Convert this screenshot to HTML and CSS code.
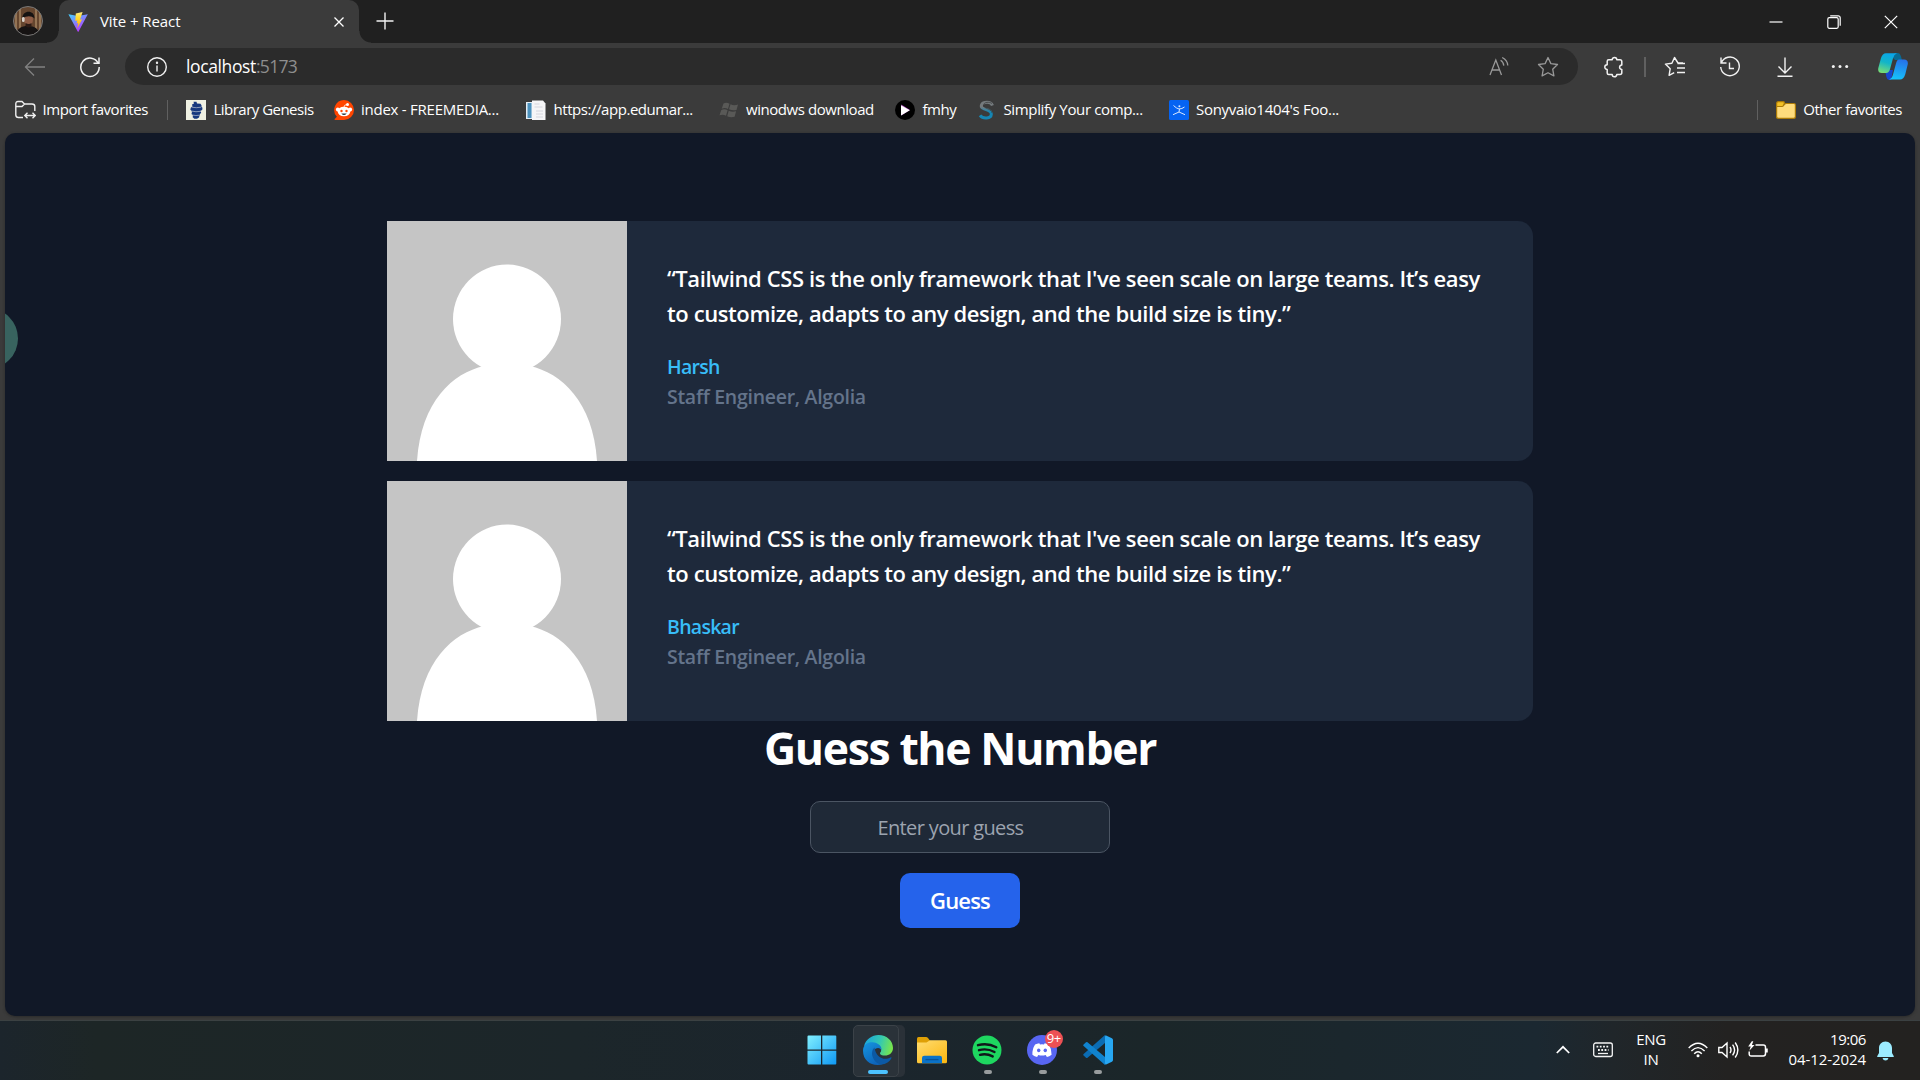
FILE: index.html
```html
<!DOCTYPE html>
<html lang="en">
<head>
<meta charset="utf-8">
<title>Vite + React</title>
<link rel="stylesheet" href="styles.css">
</head>
<body>
<div class="screen">
  <header class="titlebar">
    <div class="profile">
      <svg width="32" height="32" viewBox="0 0 32 32"><defs><clipPath id="pc"><circle cx="16" cy="16" r="14.5"/></clipPath></defs><g clip-path="url(#pc)"><rect width="32" height="32" fill="#65462f"/><path d="M4 0v32M8 0v26M24 0v26M28 0v32" stroke="#a58562" stroke-width="1.500"/><path d="M3 32c2-9 6-11 13-11s11 3 13 11z" fill="#161313"/><ellipse cx="16.500" cy="14.500" rx="4.500" ry="6.500" fill="#8f5d46"/><path d="M10.500 13.500c-1-8 12-10 12 0-3-3-8-3-12 0z" fill="#161312"/><path d="M13.500 18q3.500 2 6 0v3q-3 3-6 0z" fill="#2b1a15"/><rect x="10" y="12" width="2.600" height="5" rx="1.300" fill="#d8d2cb"/></g><circle cx="16" cy="16" r="14.500" fill="none" stroke="#777" stroke-width="1"/></svg>
    </div>
    <div class="tab">
      <svg class="vite" width="20" height="20" viewBox="0 0 20 20"><defs><linearGradient id="va" x1="0" y1="0" x2=".6" y2="1"><stop stop-color="#41d1ff"/><stop offset="1" stop-color="#bd34fe"/></linearGradient><linearGradient id="vb" x1="0" y1="0" x2="0" y2="1"><stop stop-color="#ffea83"/><stop offset=".3" stop-color="#ffdd35"/><stop offset="1" stop-color="#ffa800"/></linearGradient></defs><path d="M.4 2.300 9.700 19.600q.5.700.9 0L19.800 2.300l-9.700 1.700z" fill="url(#va)"/><path d="M14.600.1 7.800 1.400l-.5 7.500 2-.4-.7 3 1.600-.4-1 5.400 5-9.200-2.200.4z" fill="url(#vb)"/></svg>
      <span class="tab-title">Vite + React</span>
      <svg class="tab-close" width="12" height="12" viewBox="0 0 12 12"><path d="M1.500 1.500l9 9M10.500 1.500l-9 9" stroke="#fff" stroke-width="1.300"/></svg>
    </div>
    <svg class="newtab" width="18" height="18" viewBox="0 0 18 18"><path d="M9 .5v17M.5 9h17" stroke="#f2f2f2" stroke-width="1.400"/></svg>
    <div class="window-controls">
      <span><svg width="14" height="14" viewBox="0 0 14 14"><path d="M.5 7h13" stroke="#fff" stroke-width="1.200"/></svg></span>
      <span><svg width="14" height="14" viewBox="0 0 14 14" fill="none" stroke="#fff" stroke-width="1.200"><rect x=".8" y="2.700" width="10.400" height="10.600" rx="1.500"/><path d="M3.200.8h8a2 2 0 0 1 2 2v8"/></svg></span>
      <span><svg width="14" height="14" viewBox="0 0 14 14"><path d="M.8.8l12.400 12.400M13.200.8L.8 13.200" stroke="#fff" stroke-width="1.200"/></svg></span>
    </div>
  </header>

  <div class="toolbar">
    <svg class="back" width="22" height="20" viewBox="0 0 22 20" fill="none" stroke="#818181" stroke-width="1.300"><path d="M21 10H1.500M10 1.500 1.500 10l8.500 8.500"/></svg>
    <svg class="refresh" width="22" height="22" viewBox="0 0 22 22" fill="none" stroke="#f2f2f2" stroke-width="1.500"><path d="M19.300 7.300A9.200 9.200 0 1 0 20.200 11M20 1.500V7.300h-5.500"/></svg>
    <div class="address">
      <svg width="22" height="22" viewBox="0 0 22 22" fill="none" stroke="#f0f0f0" stroke-width="1.400"><circle cx="11" cy="11" r="9.300"/><path d="M11 9.500v6"/><circle cx="11" cy="6.800" r=".5" fill="#f0f0f0"/></svg>
      <span class="host">localhost</span><span class="port">:5173</span>
      <svg class="read" width="22" height="22" viewBox="0 0 22 22" fill="none" stroke="#999" stroke-width="1.300"><path d="M2 19 7.800 4l5.700 15M3.900 14h7.800M12.600 4.300c2 1.200 3 3 3.200 5.300M14.200 1.500c3.500 1.800 5.400 4.500 5.600 8"/></svg>
      <svg class="star" width="22" height="22" viewBox="0 0 22 22" fill="none" stroke="#999" stroke-width="1.300" stroke-linejoin="round"><path d="M11 1.500l2.900 6.100 6.600.9-4.800 4.700 1.200 6.700L11 16.700l-5.900 3.200 1.200-6.700L1.500 8.500l6.600-.9z"/></svg>
    </div>
    <div class="tools">
      <span class="slot puzzle"><svg width="22" height="22" viewBox="0 0 22 22" fill="none" stroke="#f2f2f2" stroke-width="1.500" stroke-linejoin="round"><path d="M5.700 3.700h3.500a2.300 2.300 0 1 1 4.600 0H17q1.800 0 1.800 1.800V9a2.200 2.200 0 1 0 0 4.400v3.400q0 1.700-1.800 1.700h-3.200a2.300 2.300 0 1 1-4.600 0H5.700q-1.500 0-1.500-1.500v-3.500a2.400 2.400 0 1 1 0-4.800V5.200q0-1.500 1.500-1.500z"/></svg></span>
      <i class="sep"></i>
      <span class="slot"><svg width="22" height="22" viewBox="0 0 22 22" fill="none" stroke="#f2f2f2" stroke-width="1.400" stroke-linejoin="round"><path d="M19 7h-5L10.500 1.500 7.900 7.200l-6.500.9 4.800 4.600-1.100 6.600 5.100-2.700M13.500 7.500H21M13 12h8M13 16.500h8"/></svg></span>
      <span class="slot"><svg width="22" height="22" viewBox="0 0 22 22" fill="none" stroke="#f2f2f2" stroke-width="1.400"><path d="M2 1.500V7h5.500M2.300 7a9.300 9.300 0 1 1-.6 4M10.500 6.500v6H15"/></svg></span>
      <span class="slot"><svg width="22" height="22" viewBox="0 0 22 22" fill="none" stroke="#f2f2f2" stroke-width="1.400"><path d="M11 1.500v15M4.500 10.500l6.500 6.500 6.500-6.500M3.500 20.300h15"/></svg></span>
      <span class="slot"><svg width="22" height="22" viewBox="0 0 22 22" fill="#f2f2f2"><circle cx="4.300" cy="10.500" r="1.500"/><circle cx="11" cy="10.500" r="1.500"/><circle cx="17.700" cy="10.500" r="1.500"/></svg></span>
      <svg class="copilot" width="30" height="27" viewBox="0 0 30 27"><defs><linearGradient id="ca" x1=".5" y1="0" x2=".2" y2="1"><stop stop-color="#0aa6e8"/><stop offset=".45" stop-color="#12b5c8"/><stop offset="1" stop-color="#7cde72"/></linearGradient><linearGradient id="cb" x1=".6" y1="0" x2=".4" y2="1"><stop stop-color="#2672ea"/><stop offset="1" stop-color="#16c4fb"/></linearGradient></defs><path d="M17 0h3q2 0 2.800 3L24 7h-7l-4-4z" fill="#086b94"/><path d="M7 17h8l-2 10h-2Q9 27 8.400 24z" fill="#1746cf"/><path d="M8 .3h11q-3 1.200-4 5l-3 11q-1 3.700-4 3.700H4Q-.6 20 .3 15L3 5Q4.500.3 8 .3z" fill="url(#ca)"/><path d="M21 6.600h5q4.600.2 3.700 5l-2.500 10Q25.600 26.600 22 26.600H11q3-1 4-5l3-11q1-4 3-4z" fill="url(#cb)"/></svg>
    </div>
  </div>

  <nav class="favorites">
    <a class="fav import"><svg width="21" height="20" viewBox="0 0 21 20" fill="none" stroke="#f0f0f0" stroke-width="1.400"><path d="M8 17.500H3.500Q.8 17.500.8 15V4Q.8 1.500 3 1.500h4L9.500 4H17q2.800 0 2.800 2.600V11M1 6.500h6L9.500 4M10 15.500h10M12.500 12.800 9.800 15.500l2.700 2.700M17.500 12.800l2.700 2.700-2.700 2.700"/></svg><span>Import favorites</span></a>
    <i class="sep"></i>
    <a class="fav libgen"><svg width="20" height="20" viewBox="0 0 20 20"><path fill="#eff0e2" d="M0 0h20v20H0z"/><path d="M7.500 1.800h3l.5 1.700 3.500.3q1.500 1.200 1 3.200l1 .8-.3 2.200-1.700.8.700 1.700-1.400 2-.8 3-2 1.300H8.300L6.500 17l.7-1.200L5.500 14l.5-2.300L4.300 9.500 5 7.300l1.500-.8L6 4.500l2-1z" fill="#17387e"/><path d="M5.500 7.200q5 1 9.500 0M5 11q5 1.300 10 .3M6 15q4 1 7.500.2" fill="none" stroke="#b9c2cf" stroke-width=".7"/></svg><span>Library Genesis</span></a>
    <a class="fav reddit"><svg width="20" height="20" viewBox="0 0 20 20"><path d="M10 0a10 10 0 1 1 0 20H1.200q-1.200-.3-.3-1.200l2-2A10 10 0 0 1 10 0z" fill="#ff4500"/><circle cx="3.800" cy="9.500" r="1.900" fill="#fff"/><circle cx="16.200" cy="9.500" r="1.900" fill="#fff"/><ellipse cx="10" cy="11.500" rx="6.300" ry="4.800" fill="#fff"/><circle cx="13.500" cy="4.500" r="1.500" fill="#fff"/><path d="M10 7q.2-2.500 3-2.500" stroke="#fff" stroke-width=".8" fill="none"/><circle cx="7.500" cy="11" r="1.200" fill="#ff4500"/><circle cx="12.500" cy="11" r="1.200" fill="#ff4500"/><path d="M7.300 13.500h5.400q-2.700 3-5.400 0z" fill="#27363c"/></svg><span>index - FREEMEDIA...</span></a>
    <a class="fav edu"><svg width="20" height="20" viewBox="0 0 20 20"><path d="M0 2h10v17H0z" fill="#e4edf5"/><path d="M1.500 3h4v15h-4z" fill="#4b91bd"/><path d="M6 .5h11l2.500 3V20H6z" fill="#f5f5f7"/><path d="M8.500 4h5M8.500 7h8M10 11h7M10 14h7M10 17h7" stroke="#d5d6de" stroke-width="1"/></svg><span>https://app.edumar...</span></a>
    <a class="fav win"><svg width="20" height="20" viewBox="0 0 20 20" fill="#595957"><path d="M4.500 3.500q3-1.500 6 .2L9 9q-3-1.700-6.300-.3zM11.500 4.300q3.500 1.700 7.500.2L17.500 10q-4 1-7.500-.7zM2.300 10q3.200-1.400 6.300.2L7 15.700q-3-1.800-6.500-.4zM9.700 10.700q3.500 1.700 7.400.5l-1.500 5.600q-4 1.200-7.400-.6z"/></svg><span>winodws download</span></a>
    <a class="fav fmhy"><svg width="20" height="20" viewBox="0 0 20 20"><circle cx="10" cy="10" r="10"/><path d="M6.300 4.500 15 10l-8.700 5.500z" fill="#a238b4"/><path d="M6 5.200 14.800 10.300 6 15.600z" fill="#fff"/></svg><span>fmhy</span></a>
    <a class="fav simplify"><svg width="20" height="20" viewBox="0 0 20 20" fill="none"><defs><linearGradient id="sg" x1="0" y1="0" x2="0" y2="1"><stop offset=".3" stop-color="#747a7d"/><stop offset=".62" stop-color="#1586b4"/></linearGradient></defs><path d="M15.500 5.500Q14 2.200 10 2.200C4 2.200 3 6.500 6 8.300s8.500 1.500 8.300 6c-.3 4.500-8.300 5-11.300 1" stroke="url(#sg)" stroke-width="3"/><path d="M15 3.500C11 .8 5 3 7 6.500c2 2.800 8 2.500 8 6.500" stroke="#3a3a3a" stroke-width=".7"/></svg><span>Simplify Your comp...</span></a>
    <a class="fav sony"><svg width="20" height="20" viewBox="0 0 20 20"><rect width="20" height="20" rx="1.500" fill="#0563f2"/><path d="M4.500 5.500q3 3 5.500 3.500 3 0 5.500-2M10.500 9l-.5 3-6 2.700M10 12l6 2.700" fill="none" stroke="#d9e8ff" stroke-width="1"/><circle cx="10.400" cy="6.300" r="1" fill="#d9e8ff"/></svg><span>Sonyvaio1404's Foo...</span></a>
    <i class="sep last"></i>
    <a class="fav other"><svg width="20" height="18" viewBox="0 0 20 18" stroke="#ac7b08" stroke-width="1.200"><path d="M.6 15.500V2.500q0-1.900 1.900-1.900h4.500q1.500 0 1.500 1.400L7.500 5z" fill="#f3c025"/><path d="M.6 5.500h5.200q1.200 0 2-1.300T10 2.500h8q1.400 0 1.400 1.500v11.500q0 1.900-1.900 1.900h-15q-1.900 0-1.900-1.900z" fill="#ffdc7c"/></svg><span>Other favorites</span></a>
  </nav>

  <div class="viewport">
    <div class="side-bubble"></div>
    <main class="content">
      <figure class="card">
        <svg class="avatar" width="240" height="240" viewBox="0 0 240 240"><path fill="#c5c5c5" d="M0 0h240v240H0z"/><g fill="#fff"><ellipse cx="120" cy="98" rx="54" ry="54.500"/><path d="M30 240C34 180 66 152 97 145h46c31 7 63 35 67 95z"/></g></svg>
        <div class="card-body">
          <blockquote>“Tailwind CSS is the only framework that I've seen scale on large teams. It’s easy<br>to customize, adapts to any design, and the build size is tiny.”</blockquote>
          <figcaption><div class="name">Harsh</div><div class="role">Staff Engineer, Algolia</div></figcaption>
        </div>
      </figure>
      <figure class="card">
        <svg class="avatar" width="240" height="240" viewBox="0 0 240 240"><path fill="#c5c5c5" d="M0 0h240v240H0z"/><g fill="#fff"><ellipse cx="120" cy="98" rx="54" ry="54.500"/><path d="M30 240C34 180 66 152 97 145h46c31 7 63 35 67 95z"/></g></svg>
        <div class="card-body">
          <blockquote>“Tailwind CSS is the only framework that I've seen scale on large teams. It’s easy<br>to customize, adapts to any design, and the build size is tiny.”</blockquote>
          <figcaption><div class="name">Bhaskar</div><div class="role">Staff Engineer, Algolia</div></figcaption>
        </div>
      </figure>
      <section class="game">
        <h1>Guess the Number</h1>
        <input type="number" placeholder="Enter your guess">
        <button>Guess</button>
      </section>
    </main>
  </div>

  <footer class="taskbar">
    <div class="apps">
      <span class="app"><svg width="30" height="30" viewBox="0 0 30 30"><defs><linearGradient id="wg" gradientUnits="userSpaceOnUse" x1="0" y1="0" x2="30" y2="30"><stop stop-color="#83f1ff"/><stop offset="1" stop-color="#0c97f5"/></linearGradient></defs><path d="M.5 1.500q0-1 1-1H14v14H.5zM15.300.5h13q1 0 1 1v13h-14zM.5 15.700H14v13.800H1.500q-1 0-1-1zM15.300 15.700h14v12.800q0 1-1 1h-13z" fill="url(#wg)"/></svg></span>
      <span class="app edge"><svg width="30" height="30" viewBox="0 0 30 30"><defs><linearGradient id="ea" x1="0" y1=".3" x2="1" y2=".5"><stop stop-color="#1aa5dd"/><stop offset=".55" stop-color="#35c9b0"/><stop offset="1" stop-color="#79e64a"/></linearGradient><linearGradient id="eb" x1="0" y1="0" x2=".6" y2="1"><stop stop-color="#1696e0"/><stop offset="1" stop-color="#0d62b8"/></linearGradient></defs><path d="M1 11C3 4 9 0 15.500 0 24 0 30 6 30 13c0 5-4 7.500-8 7.500-5 0-6-2-4-4 1.500-5-7-9.500-17-5.500z" fill="url(#ea)"/><path d="M.2 13.500C2 8 7 6.800 11 7.500c5 .8 8 4 7.500 8-.5-3-6-4-8 1-2 5.500 3 13 9.500 12.500C10 32.500-1.500 26 .2 13.500z" fill="url(#eb)"/><path d="M11.500 12.500c-5.500 5-1 15.500 6.500 17 5 0 9-3 10.500-6.500.3-.8-.4-1-1-.6-6 3.500-14.500.6-16-9.900z" fill="#0c59a4"/></svg><i class="run active"></i></span>
      <span class="app"><svg width="30" height="28" viewBox="0 0 30 28"><defs><linearGradient id="fg" x1="0" y1="0" x2=".8" y2="1"><stop stop-color="#ffdc70"/><stop offset="1" stop-color="#fcb916"/></linearGradient></defs><path d="M0 9V2.500Q0 1 1.500 1H9q1.200 0 2 1l2.300 3-3 5z" fill="#dfa006"/><path d="M0 6.500h9.500L13 4.300h15.500q1.500 0 1.500 1.500v20q0 1.500-1.500 1.500h-27Q0 27.300 0 25.800z" fill="url(#fg)"/><path d="M5 27.300V22q0-2.200 2.300-2.200h15.400Q25 19.800 25 22v5.300z" fill="#0b72c7"/><path d="M8.500 23.600h13" stroke="#07539a" stroke-width="1.300"/></svg></span>
      <span class="app"><svg width="30" height="30" viewBox="0 0 30 30"><circle cx="15" cy="15" r="14.500" fill="#1ed760"/><path d="M6 10.200q9.500-2.700 18.300 2M7 15.200q8-2.200 15.500 1.800M8 19.800q6.500-1.800 12.700 1.600" fill="none" stroke="#10171a" stroke-width="2.400" stroke-linecap="round"/></svg><i class="run"></i></span>
      <span class="app discord"><svg width="30" height="30" viewBox="0 0 30 30"><circle cx="15" cy="15" r="15" fill="#5866f2"/><path d="M12.300 8.200l.7 1.300q2-.3 4 0l.7-1.300q2.300.4 4.200 1.300 3 4.800 2.700 10.300-2.300 1.800-4.700 2.300l-1.200-2q-3.700 1-7.400 0l-1.200 2q-2.500-.5-4.700-2.300Q5 14.200 8.100 9.500q2-.9 4.200-1.300z" fill="#fff"/><ellipse cx="11.700" cy="15.300" rx="1.700" ry="1.900" fill="#5866f2"/><ellipse cx="18.300" cy="15.300" rx="1.700" ry="1.900" fill="#5866f2"/></svg><b class="badge">9+</b><i class="run"></i></span>
      <span class="app"><svg width="30" height="30" viewBox="0 0 30 30"><path d="M22 0v8L4.500 22.700q-.8.600-1.500 0L.6 20.500q-.8-.8 0-1.600z" fill="#0b6cb3"/><path d="M22 30v-8L4.500 7.300Q3.700 6.700 3 7.300L.6 9.500q-.8.800 0 1.600z" fill="#1083cf"/><path d="M22 0l6.900 3.200q1.100.6 1.100 1.800v20q0 1.200-1.100 1.800L22 30q1 0 0-1.500v-27Q23 0 22 0z" fill="#27a7f2"/></svg><i class="run"></i></span>
    </div>
    <div class="tray">
      <svg class="chev" width="14" height="10" viewBox="0 0 14 10" fill="none" stroke="#fff" stroke-width="1.700"><path d="M.8 8 7 1.800 13.200 8"/></svg>
      <svg class="kbd" width="20" height="16" viewBox="0 0 20 16" fill="none" stroke="#f5f5f5" stroke-width="1.300"><rect x=".7" y="1" width="18.600" height="13.500" rx="2"/><path d="M3.500 4.700h13M5 8h10.500" stroke-width="1.800" stroke-dasharray="1.800 1.500"/><path d="M5 11.500h10"/></svg>
      <div class="lang">ENG<br><em>IN</em></div>
      <svg class="wifi" width="20" height="16" viewBox="0 0 20 16" fill="none" stroke="#fff" stroke-width="1.400"><path d="M.7 6q9.300-9.500 18.600 0M3.400 9q6.600-6.700 13.200 0M6.200 11.800q3.800-4 7.600 0"/><circle cx="10" cy="13.700" r="1.500" fill="#fff" stroke="none"/></svg>
      <svg class="vol" width="21" height="18" viewBox="0 0 21 18" fill="none" stroke="#fff" stroke-width="1.400"><path d="M.8 6.500v5H4l5 4.500V2L4 6.500zM12 6q2 3 0 6M14.600 3.700q4 5.300 0 10.600M17.200 1.500q5.300 7.500 0 15"/></svg>
      <svg class="batt" width="21" height="18" viewBox="0 0 21 18" fill="none" stroke="#fff" stroke-width="1.500"><path d="M7.500 4h7.800q2.200 0 2.200 2.200v6.600q0 2.200-2.200 2.200h-12Q1.200 15 1.200 12.800V10.500M19 7.500v4"/><path d="M3.800.3.2 5.500h2.500L1.300 9.700 6.500 4H3.900L5.300.3z" fill="#fff" stroke="none"/></svg>
      <div class="clock"><em>19:06</em><br>04-12-2024</div>
      <svg class="bell" width="17" height="20" viewBox="0 0 17 20" fill="#9cecff"><path d="M8.500.5C4.500.5 2 3.500 2 7v5L.3 15q-.4 1 .6 1h15.200q1 0 .6-1L15 12V7C15 3.500 12.500.5 8.500.5zM5.500 17h6q-.7 2.600-3 2.600t-3-2.600z"/></svg>
    </div>
  </footer>
</div>
</body>
</html>
```

FILE: styles.css
```css
* { box-sizing: border-box; }
body {
  margin: 0;
  background: #3b3b3b;
  color: #fff;
  font-family: "Open Sans", "Noto Sans", sans-serif;
  overflow: hidden;
}
svg { display: block; flex: none; }
figure, blockquote, h1 { margin: 0; }
em { font-style: normal; }
.screen { width: 1920px; height: 1080px; display: flex; flex-direction: column; }

/* Title bar */
.titlebar { height: 43px; display: flex; background: #202020; }
.profile {
  width: 59px;
  padding: 5px 0 0 12px;
  background: radial-gradient(circle at 0 0, #202020 11px, #3b3b3b 12px) right bottom / 12px 12px no-repeat;
}
.tab {
  position: relative;
  width: 300px;
  display: flex;
  align-items: center;
  padding: 1px 14px 0 9px;
  background: #3b3b3b;
  border-radius: 10px 10px 0 0;
}
.tab::after {
  content: "";
  position: absolute;
  left: 100%;
  bottom: 0;
  width: 12px;
  height: 12px;
  background: radial-gradient(circle at 100% 0, transparent 11px, #3b3b3b 12px);
}
.tab-title { margin: 0 auto 3px 12px; font-size: 15px; letter-spacing: -0.08px; }
.newtab { margin: 12px 0 0 17px; }
.window-controls { margin-left: auto; display: flex; }
.window-controls span { width: 57.500px; display: flex; justify-content: center; align-items: center; }

/* Toolbar */
.toolbar { height: 47px; display: flex; align-items: center; padding: 0 12px 0 24px; }
.refresh { margin-left: 33px; }
.address {
  flex: none;
  width: 1453px;
  height: 37px;
  margin-left: 24px;
  padding: 0 19px 0 21px;
  display: flex;
  align-items: center;
  background: #2b2b2b;
  border-radius: 19px;
  font-size: 17.500px;
}
.host { margin: 0 0 1px 18px; letter-spacing: -0.38px; }
.port { margin-bottom: 1px; color: #8e8e8e; letter-spacing: -0.66px; }
.read { margin-left: auto; }
.star { margin-left: 27px; }
.tools { flex: 1; display: flex; align-items: center; }
.slot { width: 55px; display: flex; justify-content: center; flex: none; }
.puzzle { margin-left: 8.500px; }
.sep { width: 1px; height: 20px; background: #606060; flex: none; }
.tools .sep { width: 2px; margin: 0 0 0 2.500px; }
.tools .sep + .slot { margin-left: 1px; }
.copilot { margin-left: auto; }

/* Favorites */
.favorites {
  height: 43px;
  display: flex;
  align-items: center;
  padding: 0 18px 3px 15px;
  font-size: 15px;
  line-height: 20px;
  letter-spacing: -0.44px;
}
.favorites .sep { margin-left: 19px; }
.favorites .sep.last { margin-left: auto; }
.fav { display: flex; align-items: center; gap: 7.500px; white-space: nowrap; }
.fav span { margin-bottom: 3px; }
.import { width: 133px; gap: 6.500px; }
.libgen { width: 148px; margin-left: 18px; letter-spacing: -0.52px; }
.reddit { width: 192px; letter-spacing: -0.25px; gap: 7px; }
.edu { width: 193px; letter-spacing: -0.45px; }
.win { width: 176px; gap: 7px; }
.fmhy { width: 81.500px; }
.simplify { width: 192px; letter-spacing: -0.36px; gap: 7px; }
.sony { letter-spacing: -0.28px; }
.other { margin-left: 18px; }

/* Page */
.viewport {
  position: relative;
  height: 883px;
  margin: 0 5px 4px;
  border-radius: 10px;
  background: #111827;
  overflow: hidden;
  box-shadow: 0 1px 3px #2a2a2a;
}
.side-bubble {
  position: absolute;
  left: -48px;
  top: 174.500px;
  width: 61px;
  height: 61px;
  border-radius: 50%;
  background: #38635f;
}
.content { width: 1146px; margin: 0 auto; padding-top: 88px; display: flex; flex-direction: column; }
.card { display: flex; background: #1e293b; border-radius: 0 15px 15px 0; }
.card + .card { margin-top: 20px; }
.card-body { padding: 40px 0 0 40px; display: flex; flex-direction: column; gap: 21px; }
blockquote { font-size: 22px; font-weight: 600; line-height: 35px; letter-spacing: -0.4px; white-space: nowrap; }
figcaption { font-size: 19.500px; font-weight: 600; line-height: 30px; }
.name { color: #38bdf8; letter-spacing: -0.72px; }
.role { color: #64748b; letter-spacing: -0.28px; }
.game { display: flex; flex-direction: column; align-items: center; }
h1 { font-size: 44.500px; font-weight: 700; line-height: 50px; letter-spacing: -1.36px; padding-top: 2px; margin-bottom: 28px; }
input {
  width: 300px;
  height: 52px;
  padding: 1px 20px 0 16px;
  border: 1px solid #4b5563;
  border-radius: 10px;
  background: #1f2937;
  color: #fff;
  font: 20px "Open Sans", "Noto Sans", sans-serif;
  letter-spacing: -0.64px;
  text-align: center;
}
input::placeholder { color: #9ca3af; opacity: 1; }
button {
  width: 120px;
  height: 55px;
  margin-top: 20px;
  padding: 0 0 2px;
  border: 0;
  border-radius: 10px;
  background: #2563eb;
  color: #fff;
  font: 600 22px "Open Sans", "Noto Sans", sans-serif;
  letter-spacing: -0.81px;
}

/* Taskbar */
.taskbar {
  height: 60px;
  display: flex;
  padding-bottom: 1px;
  border-top: 1px solid #3b4142;
  background: linear-gradient(90deg, #1c252c 0, #1d2626 5%, #1c262a 30%, #1b252d 45%, #1b2629 60%, #1b2831 80%, #20262a 84%, #232221 90%, #232220 100%);
}
.apps { display: flex; margin-left: 794px; }
.app { position: relative; width: 55.200px; display: flex; justify-content: center; align-items: center; }
.edge::before {
  content: "";
  position: absolute;
  left: 4px;
  top: 4px;
  width: 44px;
  height: 50px;
  border: 1px solid #3b4248;
  border-radius: 5px;
  background: #2a3239;
  box-shadow: 6px 0 0 #2a3138;
}
.edge svg { position: relative; left: 1px; }
.run {
  position: absolute;
  left: 24px;
  bottom: 5px;
  width: 8px;
  height: 4px;
  border-radius: 2px;
  background: #989c9e;
}
.run.active { left: 19px; width: 20px; background: #4cc2ff; }
.badge {
  position: absolute;
  left: 30px;
  top: 9px;
  width: 18px;
  height: 18px;
  border-radius: 50%;
  background: #ed5054;
  font-size: 13px;
  font-weight: 400;
  line-height: 17px;
  letter-spacing: -0.5px;
  text-align: center;
}
.tray { display: flex; align-items: center; margin-left: auto; padding-right: 26px; font-size: 15px; line-height: 20px; }
.kbd { margin-left: 23px; }
.lang, .clock { padding-bottom: 2px; }
.lang { width: 36px; margin-left: 20px; text-align: center; letter-spacing: -0.35px; }
.wifi { margin-left: 19px; }
.vol { margin-left: 10px; }
.batt { margin-left: 9px; }
.clock { width: 79px; margin-left: 18px; text-align: right; letter-spacing: -0.08px; }
.clock em { letter-spacing: -0.45px; }
.bell { margin-left: 11px; margin-top: 1px; }
```
